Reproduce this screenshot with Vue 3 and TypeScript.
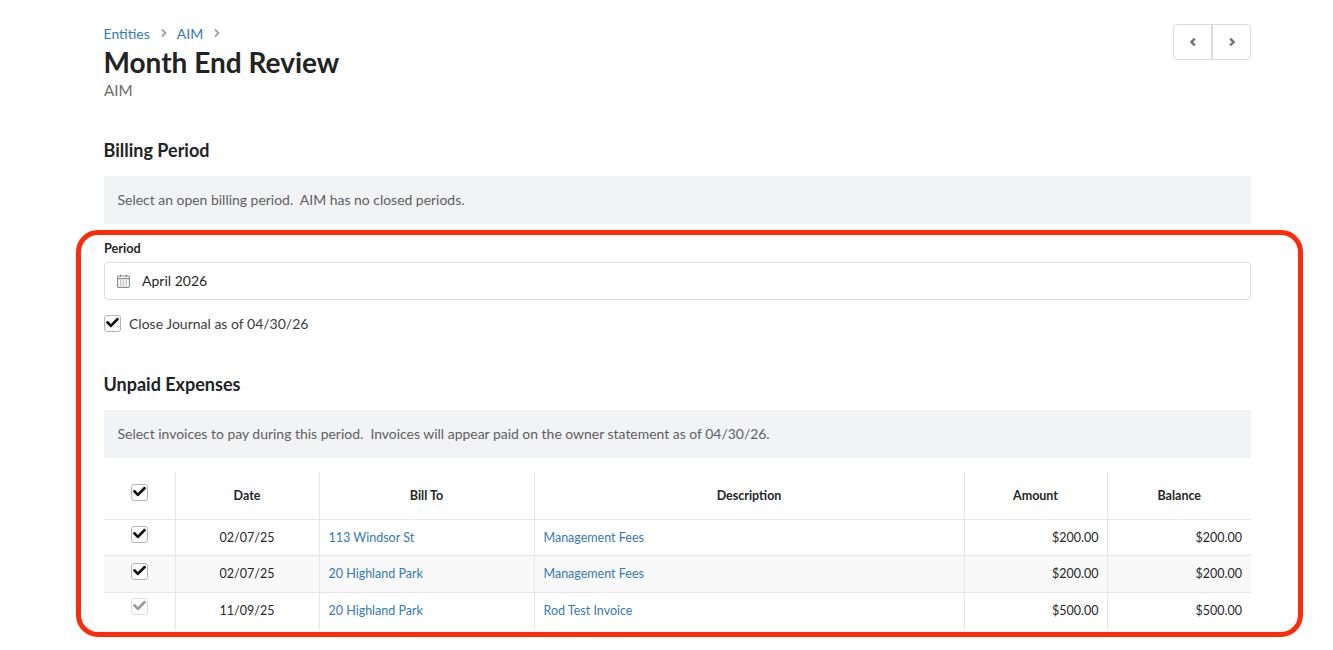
<script setup lang="ts">
interface Row {
  date: string
  billTo: string
  description: string
  amount: string
  balance: string
  disabled?: boolean
}

const rows: Row[] = [
  { date: '02/07/25', billTo: '113 Windsor St', description: 'Management Fees', amount: '$200.00', balance: '$200.00' },
  { date: '02/07/25', billTo: '20 Highland Park', description: 'Management Fees', amount: '$200.00', balance: '$200.00' },
  { date: '11/09/25', billTo: '20 Highland Park', description: 'Rod Test Invoice', amount: '$500.00', balance: '$500.00', disabled: true },
]

const checkPath =
  'M173.9 439.4 7.5 273c-10-10-10-26.2 0-36.2l36.2-36.2c10-10 26.2-10 36.2 0L192 312.7 432.1 72.6c10-10 26.2-10 36.2 0l36.2 36.2c10 10 10 26.2 0 36.2L210.1 439.4c-10 10-26.2 10-36.2 0z'
</script>

<template>
  <div class="page">
    <header class="top">
      <div>
        <nav class="crumbs">
          <a>Entities</a>
          <svg class="sep" viewBox="0 0 8 10"><path d="M2 1.5 5.5 5 2 8.5" /></svg>
          <a>AIM</a>
          <svg class="sep" viewBox="0 0 8 10"><path d="M2 1.5 5.5 5 2 8.5" /></svg>
        </nav>
        <h1>Month End Review</h1>
        <div class="sub">AIM</div>
      </div>
      <div class="pager">
        <button>
          <svg viewBox="0 0 8 10"><path d="M5.8 1.6 2.4 5l3.4 3.4" /></svg>
        </button>
        <button>
          <svg viewBox="0 0 8 10"><path d="M2.2 1.6 5.6 5 2.2 8.4" /></svg>
        </button>
      </div>
    </header>

    <h2 class="billing">Billing Period</h2>
    <div class="note">Select an open billing period.&nbsp; AIM has no closed periods.</div>

    <label class="field-label">Period</label>
    <div class="input">
      <svg class="cal" viewBox="0 0 13 14">
        <rect x="0.6" y="2" width="11.8" height="11.4" rx="1.2" />
        <path d="M0.6 4.6h11.8M3.5 0.4v2.6M9.5 0.4v2.6" />
        <path class="dots" d="M3 7h1.4M5.8 7h1.4M8.6 7h1.4M3 9h1.4M5.8 9h1.4M8.6 9h1.4M3 11h1.4M5.8 11h1.4M8.6 11h1.4" />
      </svg>
      <span>April 2026</span>
    </div>

    <div class="check-row">
      <span class="box">
        <svg viewBox="0 0 512 512"><path :d="checkPath" /></svg>
      </span>
      <span>Close Journal as of 04/30/26</span>
    </div>

    <h2 class="unpaid">Unpaid Expenses</h2>
    <div class="note">Select invoices to pay during this period.&nbsp; Invoices will appear paid on the owner statement as of 04/30/26.</div>

    <table>
      <colgroup>
        <col style="width: 71px" />
        <col style="width: 144px" />
        <col style="width: 215px" />
        <col style="width: 430px" />
        <col style="width: 143px" />
        <col />
      </colgroup>
      <thead>
        <tr>
          <th>
            <span class="box">
              <svg viewBox="0 0 512 512"><path :d="checkPath" /></svg>
            </span>
          </th>
          <th>Date</th>
          <th>Bill To</th>
          <th>Description</th>
          <th>Amount</th>
          <th>Balance</th>
        </tr>
      </thead>
      <tbody>
        <tr v-for="(row, i) in rows" :key="i" :class="['row', 'row-' + i]">
          <td class="center">
            <span :class="['box', { off: row.disabled }]">
              <svg viewBox="0 0 512 512"><path :d="checkPath" /></svg>
            </span>
          </td>
          <td class="center">{{ row.date }}</td>
          <td><a>{{ row.billTo }}</a></td>
          <td><a>{{ row.description }}</a></td>
          <td class="right amount">{{ row.amount }}</td>
          <td class="right">{{ row.balance }}</td>
        </tr>
      </tbody>
    </table>

    <div class="callout"></div>
  </div>
</template>

<style>
html,
body {
  background: #fff;
}
</style>

<style scoped>
.page {
  position: relative;
  box-sizing: border-box;
  width: 1147px;
  height: 650px;
  margin-left: 104px;
  padding-top: 23px;
  font-family: Lato, "Liberation Sans", sans-serif;
  font-size: 14px;
  color: #252729;
}
a {
  color: #3578c0;
}
.top {
  display: flex;
  justify-content: space-between;
  align-items: flex-start;
}
.crumbs {
  display: flex;
  align-items: center;
  height: 20px;
  font-size: 14px;
  margin-left: -0.5px;
}
.sep {
  width: 8px;
  height: 10px;
  margin: 0 9px 0 10px;
  fill: none;
  stroke: #a3a3a3;
  stroke-width: 1.8;
}
h1 {
  margin: 0 0 0 -0.5px;
  font-size: 28px;
  line-height: 38px;
  font-weight: 700;
  color: #212325;
}
.sub {
  font-size: 15.2px;
  line-height: 18px;
  color: #6c6c6c;
}
.pager {
  display: flex;
  width: 78px;
  height: 36px;
  margin-top: 1px;
  box-sizing: border-box;
  border: 1px solid #dcdcdc;
  border-radius: 4px;
}
.pager button {
  flex: 0 0 37px;
  box-sizing: content-box;
  padding: 0;
  border: 0;
  background: transparent;
  display: flex;
  align-items: center;
  justify-content: center;
}
.pager button + button {
  border-left: 2px solid #dcdcdc;
}
.pager svg {
  width: 8px;
  height: 10px;
  fill: none;
  stroke: #6f7173;
  stroke-width: 2.4;
}
h2 {
  margin: 0;
  font-size: 18px;
  line-height: 24px;
  font-weight: 700;
  color: #212325;
}
.billing {
  margin-top: 39px;
  margin-bottom: 14px;
  margin-left: -0.5px;
}
.unpaid {
  margin-top: 40px;
  margin-bottom: 14px;
  margin-left: -0.5px;
}
.note {
  box-sizing: border-box;
  height: 48px;
  padding: 0 13.5px 2px;
  display: flex;
  align-items: center;
  background: #f2f3f5;
  font-size: 13.95px;
  color: #5f6062;
}
.field-label {
  display: block;
  margin-top: 16px;
  font-size: 12.7px;
  line-height: 16px;
  font-weight: 700;
}
.input {
  display: flex;
  align-items: center;
  height: 38px;
  margin-top: 6px;
  padding-left: 12px;
  padding-bottom: 1px;
  box-sizing: border-box;
  border: 1px solid #dcdddf;
  border-radius: 4px;
  font-size: 14px;
}
.cal {
  width: 13px;
  height: 14px;
  margin-right: 12px;
  fill: none;
  stroke: #8a8c8e;
  stroke-width: 1.1;
}
.check-row {
  display: flex;
  align-items: center;
  gap: 8px;
  margin-top: 14px;
  height: 18px;
  font-size: 14px;
  color: #3a3c3e;
}
.box {
  display: inline-flex;
  align-items: center;
  justify-content: center;
  box-sizing: border-box;
  width: 17px;
  height: 17px;
  border: 1px solid #b4b5b6;
  border-radius: 3px;
  background: #fff;
}
.box svg {
  width: 13px;
  height: 13px;
  margin-top: -2px;
  fill: #111;
}
.box.off {
  border-color: #dedede;
}
.box.off svg {
  fill: #9a9a9a;
}
table {
  width: 100%;
  margin-top: 14px;
  border-collapse: collapse;
  table-layout: fixed;
  font-size: 12.5px;
}
th {
  height: 47px;
  padding: 0;
  font-size: 12.5px;
  font-weight: 700;
  text-align: center;
  border-bottom: 1px solid #e6e6e6;
}
th .box {
  vertical-align: middle;
  position: relative;
  top: -3px;
}
th + th,
td + td {
  border-left: 1px solid #e6e6e6;
}
td {
  height: 36px;
  padding: 0 9px;
  box-sizing: border-box;
  border-bottom: 1px solid #e6e6e6;
}
td .box {
  vertical-align: middle;
  position: relative;
  top: -3px;
}
.row-1 td,
.row-2 td {
  height: 37px;
  padding-bottom: 1px;
}
.row-1 td .box {
  top: -2px;
}
.row-2 td .box {
  top: -4px;
}
.row-1 {
  background: #f9f9f9;
}
.row-2 td {
  border-bottom: 0;
}
td.amount {
  padding-right: 8px;
}
.center {
  text-align: center;
}
.right {
  text-align: right;
}
.callout {
  position: absolute;
  left: -28px;
  top: 230px;
  width: 1227px;
  height: 407px;
  box-sizing: border-box;
  border: 5px solid #ff2a0a;
  border-radius: 22px;
  pointer-events: none;
}
</style>
